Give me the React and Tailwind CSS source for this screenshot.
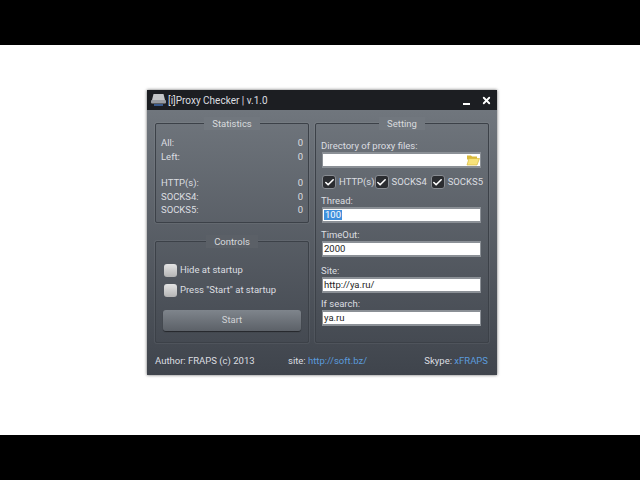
import React from 'react';
import { Check, X } from 'lucide-react';

const StatRow = ({ label }) => (
  <div className="flex justify-between h-[13.5px] leading-[13.5px]">
    <span>{label}</span>
    <span>0</span>
  </div>
);

const GroupBox = ({ title, legendClass, className, children }) => (
  <div className={`relative border border-[#3c4148] rounded-[2px] shadow-[0_0_0_1px_rgba(255,255,255,0.06)] ${className}`}>
    <div className="absolute left-0 right-0 -top-[7px] flex justify-center">
      <span className={`px-2 leading-[13px] text-[#d8dadd] ${legendClass}`}>{title}</span>
    </div>
    {children}
  </div>
);

const TextField = ({ label, value, selected, className }) => (
  <div className={className}>
    <div className="h-[13px] leading-[13px]">{label}</div>
    <div className="h-[16px] ml-px mr-[2px] bg-white border-y-2 border-x border-[#8b9096] px-[1px] flex items-center text-[#1e1e1e] leading-none">
      {selected ? <span className="bg-[#3f8fdc] text-white px-px">{value}</span> : value}
    </div>
  </div>
);

const CheckItem = ({ label, className }) => (
  <div className={`flex items-center gap-[3px] ${className}`}>
    <span className="w-[14px] h-[14px] rounded-[3px] bg-[#2b2d31] border border-[#888c92] flex items-center justify-center">
      <Check size={11} strokeWidth={3.5} className="text-white" />
    </span>
    <span>{label}</span>
  </div>
);

const OffCheck = ({ label, className }) => (
  <div className={`flex items-center gap-[3px] ${className}`}>
    <span className="w-[13px] h-[13px] rounded-[3px] bg-gradient-to-b from-[#e4e4e4] to-[#b4b4b4]" />
    <span>{label}</span>
  </div>
);

export default function App() {
  return (
    <div className="w-[640px] h-[480px] flex flex-col bg-white text-[9.5px] text-[#dcdee1] font-['Roboto',sans-serif]">
      <div className="h-[45px] bg-black" />
      <div className="flex-1 pt-[45px] pl-[147px]">
        <div className="w-[350px] h-[285px] flex flex-col bg-gradient-to-b from-[#747a81] to-[#3f444c] shadow-[0_0_3px_rgba(0,0,0,0.6)]">
          <div className="h-[20px] bg-[#1c1e22] flex items-center pl-[4px] pr-[5px] text-[#dcdee0]">
            <svg width="15" height="14" viewBox="0 0 15 14" className="mr-[2px]">
              <path d="M2.5 1h10l1.5 6H1z" fill="#c4c6c8" />
              <rect x="0" y="7" width="15" height="3.5" rx="1" fill="#9a9da2" />
              <rect x="3" y="11" width="9" height="2" fill="#3a5a8c" />
            </svg>
            <span className="flex-1 text-[10px]">[i]Proxy Checker | v.1.0</span>
            <span className="w-[7px] h-[2px] bg-white self-end mb-[5px] mr-[11px]" />
            <X size={11} strokeWidth={4} className="text-white" />
          </div>

          <div className="flex-1 flex gap-[6px] px-[8px] pt-[13px]">
            <div className="w-[154px] flex flex-col gap-[18px]">
              <GroupBox title="Statistics" legendClass="bg-[#71777e]" className="h-[100px] pt-[12px] px-[5px]">
                <StatRow label="All:" />
                <StatRow label="Left:" />
                <div className="h-[13px]" />
                <StatRow label="HTTP(s):" />
                <StatRow label="SOCKS4:" />
                <StatRow label="SOCKS5:" />
              </GroupBox>
              <GroupBox title="Controls" legendClass="bg-[#5b6067]" className="h-[102px] pt-[22px] px-[7px]">
                <OffCheck label="Hide at startup" className="h-[13px] ml-[1px]" />
                <OffCheck label={'Press "Start" at startup'} className="h-[13px] ml-[1px] mt-[7px]" />
                <div className="mt-[13px] h-[21px] rounded-[3px] bg-gradient-to-b from-[#7f858c] to-[#5c6168] shadow-[0_1px_1px_rgba(0,0,0,0.5)] flex items-center justify-center text-[#d0d2d5]">
                  Start
                </div>
              </GroupBox>
            </div>

            <GroupBox title="Setting" legendClass="bg-[#71777e]" className="w-[174px] h-[220px] px-[5px] pt-[15px]">
              <div className="h-[13px] leading-[13px]">Directory of proxy files:</div>
              <div className="relative h-[16px] ml-px mr-[2px] bg-white border-y-2 border-x border-[#8b9096]">
                <svg width="14" height="13" viewBox="0 0 14 13" className="absolute right-0 -top-px">
                  <path d="M1 2.5h4l1 1h5v3H1z" fill="#d9b93a" />
                  <path d="M1 12 3 5.5h10.5L11 12z" fill="#f7e27a" stroke="#d9b93a" strokeWidth="0.7" />
                </svg>
              </div>
              <div className="flex mt-[7px] h-[14px] items-center">
                <CheckItem label="HTTP(s)" className="w-[53px] ml-[1px]" />
                <CheckItem label="SOCKS4" className="w-[58px]" />
                <CheckItem label="SOCKS5" />
              </div>
              <TextField label="Thread:" value="100" selected className="mt-[5px]" />
              <TextField label="TimeOut:" value="2000" className="mt-[5px]" />
              <TextField label="Site:" value="http://ya.ru/" className="mt-[7px]" />
              <TextField label="If search:" value="ya.ru" className="mt-[4px]" />
            </GroupBox>
          </div>

          <div className="h-[31px] flex items-start pl-[8px] pr-[9px] pt-[10px]">
            <span className="w-[133px]">Author: FRAPS (c) 2013</span>
            <span>site: <span className="text-[#5b9bdc]">http://soft.bz/</span></span>
            <span className="ml-auto">Skype: <span className="text-[#5b9bdc]">xFRAPS</span></span>
          </div>
        </div>
      </div>
      <div className="h-[45px] bg-black" />
    </div>
  );
}
